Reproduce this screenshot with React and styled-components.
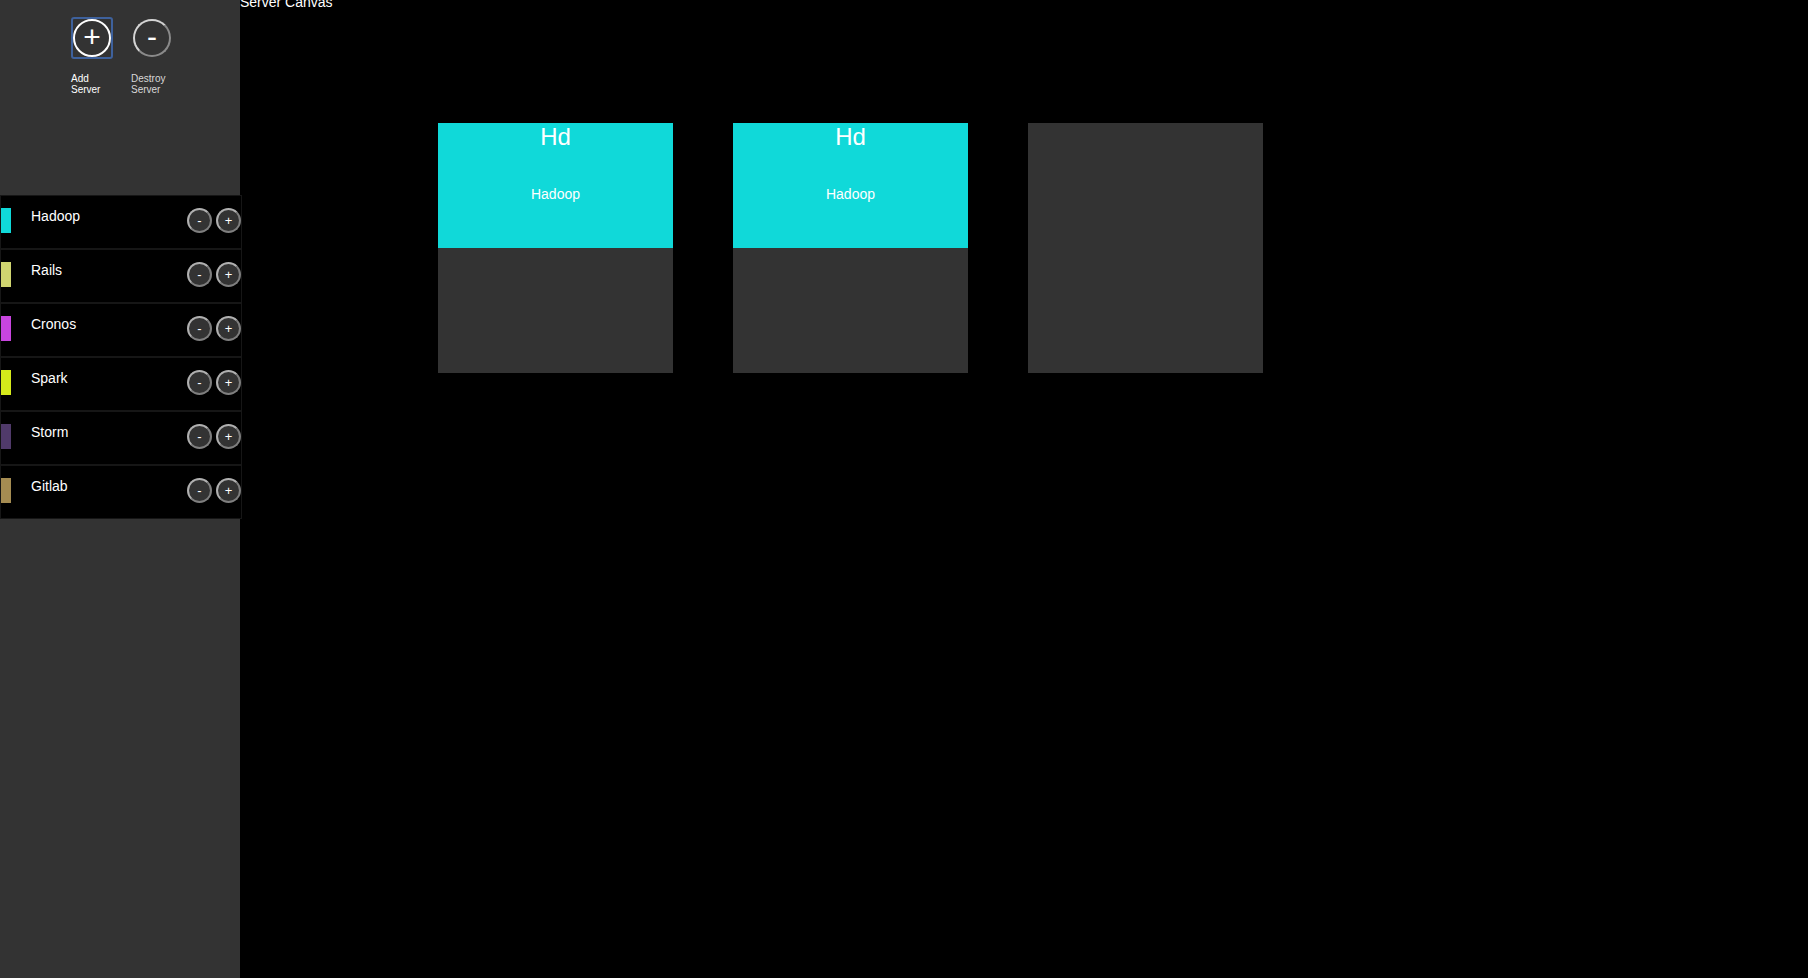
import React from "react";
import styled, { createGlobalStyle } from "styled-components";

const GlobalStyle = createGlobalStyle`
  html, body {
    margin: 0;
    padding: 0;
    background: #000;
    font-family: "Liberation Sans", Arial, sans-serif;
    color: #fff;
  }
  * { box-sizing: border-box; }
`;

const Page = styled.div`
  display: flex;
  width: 1808px;
  height: 978px;
  overflow: hidden;
  background: #000;
`;

const Sidebar = styled.aside`
  width: 240px;
  flex: 0 0 240px;
  height: 100%;
  background: #333;
  display: flex;
  flex-direction: column;
  position: relative;
  z-index: 1;
`;

const Tools = styled.div`
  height: 195px;
  flex: 0 0 195px;
  display: flex;
  gap: 18px;
  padding: 17px 0 0 71px;
  align-items: flex-start;
`;

const Tool = styled.div`
  width: 42px;
  display: flex;
  flex-direction: column;
`;

const ToolFrame = styled.div`
  width: 42px;
  height: 42px;
  border: 2px solid ${(p) => (p.$focused ? "#3e619c" : "transparent")};
  border-radius: 3px;
  display: flex;
  align-items: center;
  justify-content: center;
`;

const ToolCircle = styled.button`
  width: 38px;
  height: 38px;
  border-radius: 50%;
  border: 2px solid;
  border-color: ${(p) => (p.$bright ? "#fff" : "#d4d4d4 #8a8a8a #8a8a8a #d4d4d4")};
  background: transparent;
  color: #fff;
  font-family: "Liberation Sans", Arial, sans-serif;
  font-size: 30px;
  line-height: 1;
  padding: 0 0 2px;
  display: flex;
  align-items: center;
  justify-content: center;
  cursor: pointer;
`;

const ToolLabel = styled.span`
  margin-top: 14px;
  font-size: 10px;
  line-height: 11px;
  color: ${(p) => (p.$dim ? "#d8d8d8" : "#fff")};
`;

const List = styled.ul`
  list-style: none;
  margin: 0;
  padding: 0;
  width: 242px;
  background: #000;
`;

const Row = styled.li`
  height: 54px;
  border: 1px solid #161616;
  display: flex;
  align-items: flex-start;
  padding-top: 12px;
`;

const Swatch = styled.span`
  width: 10px;
  height: 25px;
  flex: 0 0 10px;
  background: ${(p) => p.$color};
`;

const Name = styled.span`
  margin-left: 20px;
  font-size: 14px;
  line-height: 16px;
  color: #fff;
`;

const RowButtons = styled.div`
  margin-left: auto;
  display: flex;
  gap: 4px;
`;

const RoundBtn = styled.button`
  width: 25px;
  height: 25px;
  border-radius: 50%;
  border: 2px solid;
  border-color: #b0b0b0 #7e7e7e #7e7e7e #b0b0b0;
  background: #333;
  color: #fff;
  font-family: "Liberation Sans", Arial, sans-serif;
  font-size: 13px;
  line-height: 1;
  padding: 0;
  display: flex;
  align-items: center;
  justify-content: center;
  cursor: pointer;
`;

const Canvas = styled.main`
  flex: 1;
  display: flex;
  flex-direction: column;
  background: #000;
`;

const Title = styled.div`
  margin-top: -6px;
  font-size: 14px;
  line-height: 16px;
  color: #fff;
`;

const CardRow = styled.div`
  display: flex;
  gap: 60px;
  margin: 113px 0 0 198px;
`;

const Card = styled.div`
  width: 235px;
  height: 250px;
  background: #333;
  display: flex;
  flex-direction: column;
`;

const CardTop = styled.div`
  height: 125px;
  background: ${(p) => p.$color};
  display: flex;
  flex-direction: column;
  align-items: center;
  color: #fff;
`;

const Abbr = styled.div`
  font-size: 24px;
  line-height: 28px;
`;

const CardName = styled.div`
  margin-top: 35px;
  font-size: 14px;
  line-height: 16px;
`;

const services = [
  { name: "Hadoop", color: "#10d9d9" },
  { name: "Rails", color: "#d0d570" },
  { name: "Cronos", color: "#c845df" },
  { name: "Spark", color: "#d5ea1b" },
  { name: "Storm", color: "#503a6a" },
  { name: "Gitlab", color: "#a58c52" },
];

const servers = [
  { abbr: "Hd", name: "Hadoop", color: "#10d9d9" },
  { abbr: "Hd", name: "Hadoop", color: "#10d9d9" },
  null,
];

export default function App() {
  return (
    <>
      <GlobalStyle />
      <Page>
        <Sidebar>
          <Tools>
            <Tool>
              <ToolFrame $focused>
                <ToolCircle $bright>+</ToolCircle>
              </ToolFrame>
              <ToolLabel>Add Server</ToolLabel>
            </Tool>
            <Tool>
              <ToolFrame>
                <ToolCircle>-</ToolCircle>
              </ToolFrame>
              <ToolLabel $dim>Destroy Server</ToolLabel>
            </Tool>
          </Tools>
          <List>
            {services.map((s) => (
              <Row key={s.name}>
                <Swatch $color={s.color} />
                <Name>{s.name}</Name>
                <RowButtons>
                  <RoundBtn>-</RoundBtn>
                  <RoundBtn>+</RoundBtn>
                </RowButtons>
              </Row>
            ))}
          </List>
        </Sidebar>
        <Canvas>
          <Title>Server Canvas</Title>
          <CardRow>
            {servers.map((srv, i) => (
              <Card key={i}>
                {srv && (
                  <CardTop $color={srv.color}>
                    <Abbr>{srv.abbr}</Abbr>
                    <CardName>{srv.name}</CardName>
                  </CardTop>
                )}
              </Card>
            ))}
          </CardRow>
        </Canvas>
      </Page>
    </>
  );
}
